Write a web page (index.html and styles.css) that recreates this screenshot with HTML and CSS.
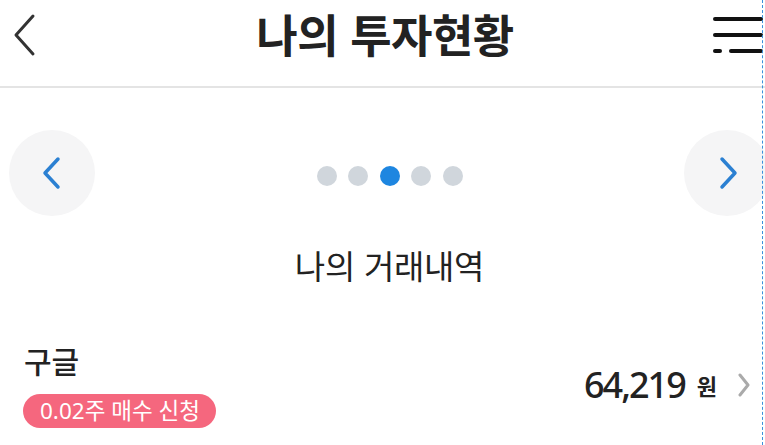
FILE: index.html
```html
<!DOCTYPE html>
<html lang="ko">
<head>
    <meta charset="UTF-8">
    <meta name="viewport" content="width=device-width, initial-scale=1.0">
    <title>나의 투자현황</title>
    <link rel="stylesheet" href="styles.css">
</head>
<body>

<div class="page">
    <div class="header">
        <button class="icon-btn back-btn" aria-label="뒤로">
            <svg width="26" height="44" viewBox="0 0 26 44"><path d="M22 3 L5 22 L22 41" fill="none" stroke="#333" stroke-width="3" stroke-linecap="round" stroke-linejoin="round"/></svg>
        </button>
        <h1 class="title">나의 투자현황</h1>
        <button class="icon-btn menu-btn" aria-label="메뉴">
            <svg width="50" height="40" viewBox="0 0 50 40"><g stroke="#111" stroke-width="4" stroke-linecap="round"><line x1="2" y1="4" x2="48" y2="4"/><line x1="2" y1="20" x2="48" y2="20"/><line x1="2" y1="36" x2="7" y2="36"/><line x1="18" y1="36" x2="48" y2="36"/></g></svg>
        </button>
    </div>

    <div class="carousel">
        <button class="nav-circle" aria-label="이전">
            <svg width="22" height="34" viewBox="0 0 22 34"><path d="M17 3 L4 17 L17 31" fill="none" stroke="#2b80d2" stroke-width="3.5" stroke-linecap="round" stroke-linejoin="round"/></svg>
        </button>
        <div class="dots">
            <span class="dot"></span>
            <span class="dot"></span>
            <span class="dot active"></span>
            <span class="dot"></span>
            <span class="dot"></span>
        </div>
        <button class="nav-circle next" aria-label="다음">
            <svg width="22" height="34" viewBox="0 0 22 34"><path d="M5 3 L18 17 L5 31" fill="none" stroke="#2b80d2" stroke-width="3.5" stroke-linecap="round" stroke-linejoin="round"/></svg>
        </button>
    </div>

    <h2 class="section-title">나의 거래내역</h2>

    <div class="trade-row">
        <div class="trade-info">
            <div class="stock-name">구글</div>
            <span class="badge">0.02주 매수 신청</span>
        </div>
        <div class="trade-amount">
            <span class="amount">64,219</span>
            <span class="won">원</span>
            <svg class="row-arrow" width="14" height="24" viewBox="0 0 14 24"><path d="M3 2 L11 12 L3 22" fill="none" stroke="#aaa" stroke-width="3" stroke-linecap="round" stroke-linejoin="round"/></svg>
        </div>
    </div>

    <div class="guide"></div>
</div>

</body>
</html>
```

FILE: styles.css
```css
body {
    font-family: "Noto Sans", "Noto Sans CJK KR", sans-serif;
    background-color: #ffffff;
    color: #222;
    margin: 0;
    padding: 0;
}
.page {
    position: relative;
    width: 765px;
    height: 445px;
    overflow: hidden;
}
.icon-btn {
    background: none;
    border: none;
    padding: 0;
    display: flex;
    cursor: pointer;
}
.header {
    height: 88px;
    box-sizing: border-box;
    border-bottom: 2px solid #e4e4e4;
    display: flex;
    align-items: center;
    justify-content: space-between;
    padding: 0 2px 16px 11px;
}
.title {
    font-family: "Noto Sans CJK KR", sans-serif;
    font-size: 45px;
    font-weight: 700;
    letter-spacing: -0.5px;
    line-height: 50px;
    color: #222;
    margin: 0 0 2px 20px;
}
.carousel {
    display: flex;
    align-items: center;
    justify-content: space-between;
    margin: 42px -5px 0 9px;
}
.nav-circle {
    width: 86px;
    height: 86px;
    border-radius: 50%;
    border: none;
    background-color: #f5f5f6;
    display: flex;
    align-items: center;
    justify-content: center;
    cursor: pointer;
    padding: 0;
}
.nav-circle.next {
    padding-left: 2px;
}
.dots {
    display: flex;
    gap: 11.5px;
    margin: 5px 0 0 0;
}
.dot {
    width: 20px;
    height: 20px;
    border-radius: 50%;
    background-color: #d0d6dc;
}
.dot.active {
    background-color: #1e86e0;
}
.section-title {
    font-family: "Noto Sans CJK KR", sans-serif;
    font-size: 33px;
    font-weight: 400;
    letter-spacing: -0.3px;
    text-align: center;
    color: #222;
    margin: 25px 0 0 14px;
}
.trade-row {
    display: flex;
    justify-content: space-between;
    align-items: flex-end;
    margin-top: 51px;
    padding: 0 14px 0 23px;
}
.stock-name {
    font-family: "Noto Sans CJK KR", sans-serif;
    font-size: 30px;
    font-weight: 500;
    line-height: 40px;
    color: #222;
    margin-left: 1px;
}
.badge {
    display: inline-block;
    margin-top: 14px;
    background-color: #f5677e;
    color: #ffffff;
    font-size: 22.5px;
    line-height: 34px;
    padding: 0 16px 0 17px;
    border-radius: 17px;
}
.trade-amount {
    display: flex;
    align-items: center;
    margin-bottom: 19px;
}
.amount {
    font-size: 36px;
    font-weight: 500;
    color: #222;
    letter-spacing: -2px;
}
.won {
    font-family: "Noto Sans CJK KR", sans-serif;
    font-size: 22px;
    font-weight: 700;
    margin-left: 12px;
}
.row-arrow {
    margin-left: 20px;
}
.guide {
    position: absolute;
    top: 0;
    left: 762px;
    height: 445px;
    border-left: 1px dashed #3a90dc;
}
```
